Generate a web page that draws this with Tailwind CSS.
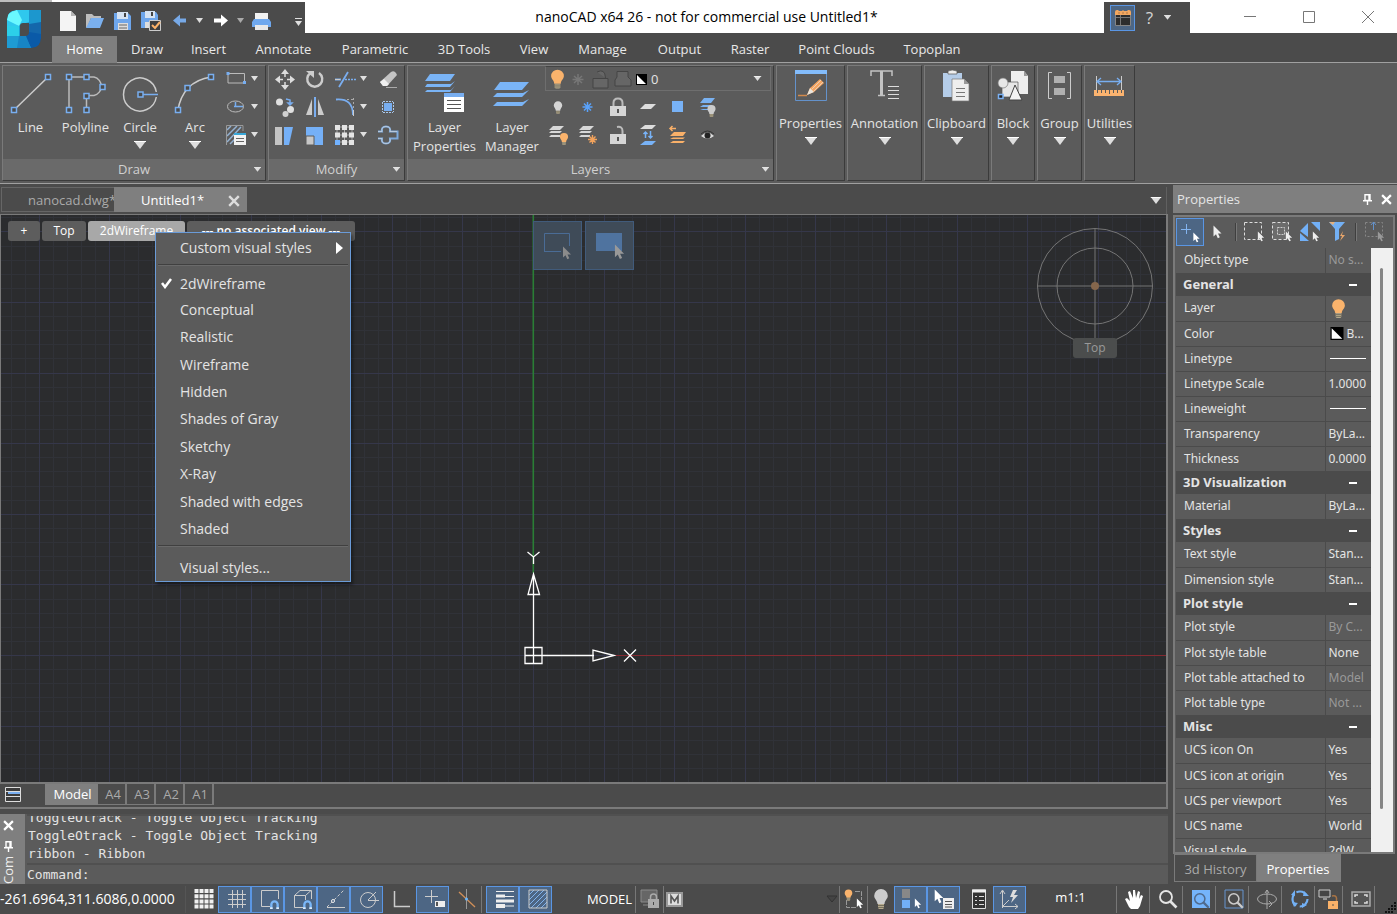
<!DOCTYPE html>
<html lang="en">
<head>
<meta charset="utf-8">
<title>nanoCAD x64 26</title>
<script src="https://cdn.jsdelivr.net/npm/@tailwindcss/browser@4"></script>
</head>
<body class="bg-[#4b4b4b]">
<svg width="0" height="0" class="absolute" aria-hidden="true">
  <defs>
    <symbol id="down" viewBox="0 0 12 8"><path d="M0 0H12L6 8Z" fill="#dedede"/><path d="M0 .5H12" stroke="#fff"/></symbol>
    <symbol id="bulb" viewBox="0 0 16 20"><path d="M8 0a6.800 6.800 0 0 1 6.800 6.800C14.800 10 11.500 11.500 11.500 15h-7C4.500 11.500 1.200 10 1.200 6.800A6.800 6.800 0 0 1 8 0Z" fill="currentColor"/><path d="M5 15h6v4l-1 1H6l-1-1z" fill="#b5a98c"/><path d="M5 16.500h6M5 18.500h6" stroke="#75705f"/></symbol>
    <symbol id="cur" viewBox="0 0 9 14"><path d="M.5 .5V11.500L3 9.200L4.800 13.200L6.800 12.300L5 8.500H8.500Z" fill="currentColor"/></symbol>
    <symbol id="pin" viewBox="0 0 9 11"><path d="M2 .8H7V6.500H2ZM6 1V6M0 6.800H9M4.500 7V11" fill="none" stroke="#fff" stroke-width="1.400"/></symbol>
    <symbol id="x" viewBox="0 0 10 10"><path d="M1 1L9 9M9 1L1 9" stroke="currentColor" stroke-width="2"/></symbol>
    <symbol id="lens" viewBox="0 0 20 20"><circle cx="8" cy="8" r="6" fill="none" stroke="currentColor" stroke-width="1.800"/><path d="M12.500 12.500L18.500 18.500" stroke="currentColor" stroke-width="2.600"/></symbol>
    <symbol id="magnet" viewBox="0 0 10 10"><path d="M1.500 10V5A3.500 3.500 0 0 1 8.500 5V10" fill="none" stroke="#7ab7f8" stroke-width="2.600"/><path d="M0 9H3M7 9H10" stroke="#fff" stroke-width="1.500"/></symbol>
    <symbol id="bw" viewBox="0 0 11 11"><path d="M0 0H11V11H0Z" fill="#000"/><path d="M1 1L10 10H1Z" fill="#fff"/></symbol>
  </defs>
</svg>

<div class="flex h-screen flex-col overflow-hidden bg-[#4b4b4b] text-[13px] leading-[18px] text-[#e4e4e4] font-['Open_Sans','Noto_Sans',sans-serif]">

<!-- Title bar and ribbon tabs -->
<header class="flex shrink-0">
  <div class="w-[52px] shrink-0 border-t-2 border-[#bdbdbd] bg-[#4b4b4b] pt-2 pl-[7px]">
    <svg width="35" height="38" viewBox="0 0 35 38" aria-label="nanoCAD">
      <path d="M10 0H34V28L24 38H0V10Z" fill="#1b9fd4"/>
      <path d="M10 0H22V12L12 15L0 22V11Q0 0 10 0Z" fill="#2fc8ee"/><path d="M10 0L15 10L12 16L0 10Q0 2 10 0Z" fill="#6af8ff"/><path d="M0 16L12 16V26H0Z" fill="#2ccfe9"/><path d="M0 26H13L10 38H0Z" fill="#1e9bd3"/>
      <path d="M22 0H34V13L22 14Z" fill="#1c97ce"/><path d="M22 14L34 12V26H22Z" fill="#1467ab"/><path d="M22 22L34 24V28Q34 38 24 38L18 26Z" fill="#0a5aa8"/><path d="M12 26H19L24 38H10Z" fill="#1785c5"/>
      <path d="M13 16Q13 13 16 13H22V22Q22 26 18 26H13Z" fill="#4b4b4b"/>
      <path d="M0 0H9Q0 1 0 9ZM35 29V38H25Q34 37 34 28Z" fill="#4b4b4b"/>
    </svg>
  </div>
  <div class="min-w-0 flex-1">
    <div class="flex h-[33px] bg-white">
      <div class="mt-[2px] flex w-[253px] shrink-0 items-center bg-[#4b4b4b]">
        <svg width="253" height="31" viewBox="52 2 253 31" aria-label="Quick access">
          <path d="M60 11H71L76 16V31H60Z" fill="#f4f4f4"/><path d="M71 11V16H76Z" fill="#b5b5b5"/>
          <path d="M86 27V14H92L94 16H101V18H91L87 28Z" fill="#bdbdbd"/><path d="M91 18H104L100 28H86Z" fill="#7ab0ef"/>
          <path d="M114 13H128L131 16V30H114Z" fill="#6ea6ec"/><path d="M117 12H128V19H117Z" fill="#d6e3f3"/><path d="M124 13H126V17H124Z" fill="#444"/><path d="M118 23H128V30H118Z" fill="#ddd"/><path d="M119 25H127M119 28H127" stroke="#666"/>
          <path d="M141 12H156L158 15V28H141Z" fill="#6ea6ec"/><path d="M145 11H155V18H145Z" fill="#d6e3f3"/><path d="M151 12H153V16H151Z" fill="#444"/><path d="M145 22H151V28H145Z" fill="#ddd"/><path d="M149.500 20.500H160.500V30.500H149.500Z" fill="#3e3e3e" stroke="#ccc"/><path d="M152 25L155 28L160 22" stroke="#fbb168" stroke-width="2" fill="none"/>
          <path d="M173 20.500L180 14.500V18.500H186V22.500H180V26.500Z" fill="#77a9e7"/><path d="M196 18H203L199.500 23Z" fill="#ddd"/>
          <path d="M228 20.500L221 14.500V18.500H214V22.500H221V26.500Z" fill="#fff"/><path d="M237 18H244L240.500 23Z" fill="#aaa"/>
          <path d="M255 13H268V21H255Z" fill="#f1f1f1"/><path d="M254 19H269L271 22V27H252V22Z" fill="#6fa8ee"/><path d="M255 25H268V30H255Z" fill="#e8e8e8"/>
          <path d="M295 18.500H302" stroke="#e0e0e0"/><path d="M295 21H302L298.500 26Z" fill="#e0e0e0"/>
        </svg>
      </div>
      <h1 class="min-w-0 flex-1 truncate pt-2 pl-1 text-center text-[14px] text-black">nanoCAD x64 26 - not for commercial use Untitled1*</h1>
      <div class="mt-[2px] flex w-[86px] shrink-0 items-center bg-[#4b4b4b] pl-[6px]">
        <button class="h-[26px] w-[25px] border border-[#5a96e4] bg-[#4d6684] pl-[3px]" aria-label="Ribbon"><svg width="18" height="18" viewBox="0 0 18 18"><path d="M1.500 5H16.500V16.500H1.500Z" fill="#2d2d2d" stroke="#858585"/><path d="M6.500 6V16M2 8.500H16" stroke="#777"/><path d="M1 3Q1 1 3 1H4L5 2H8L9 1L10 2H13L14 1H15Q17 1 17 3V6H1Z" fill="#f2a760"/><path d="M4.500 4H5.500M8.500 4H9.500M12.500 4H13.500" stroke="#6b4a2c"/></svg></button>
        <button class="w-[29px] text-center text-[17px] text-[#d5d5d5]">?</button>
        <svg width="7" height="5"><use href="#down"/></svg>
      </div>
      <div class="flex grow-0 basis-[207px] justify-end">
        <button class="w-[59px]" aria-label="Minimize"><svg class="mx-auto" width="12" height="12"><path d="M0 5.500H12" stroke="#777"/></svg></button>
        <button class="w-[59px]" aria-label="Maximize"><svg class="mx-auto" width="12" height="12"><path d="M.5 .5H11.500V11.500H.5Z" fill="none" stroke="#777"/></svg></button>
        <button class="w-[59px]" aria-label="Close"><svg class="mx-auto" width="12" height="12"><path d="M0 0L12 12M12 0L0 12" stroke="#777"/></svg></button>
      </div>
    </div>
    <nav class="flex h-[29px] items-end text-[#e8e8e8]">
      <a href="#" class="relative z-10 -mb-px h-[27px] w-[65px] bg-[#7f7f7f] pt-1 text-center text-white">Home</a>
      <a href="#" class="h-[26px] w-[60px] pt-1 text-center">Draw</a>
      <a href="#" class="h-[26px] w-[63px] pt-1 text-center">Insert</a>
      <a href="#" class="h-[26px] w-[87px] pt-1 text-center">Annotate</a>
      <a href="#" class="h-[26px] w-[96px] pt-1 text-center">Parametric</a>
      <a href="#" class="h-[26px] w-[82px] pt-1 text-center">3D Tools</a>
      <a href="#" class="h-[26px] w-[58px] pt-1 text-center">View</a>
      <a href="#" class="h-[26px] w-[79px] pt-1 text-center">Manage</a>
      <a href="#" class="h-[26px] w-[75px] pt-1 text-center">Output</a>
      <a href="#" class="h-[26px] w-[66px] pt-1 text-center">Raster</a>
      <a href="#" class="h-[26px] w-[107px] pt-1 text-center">Point Clouds</a>
      <a href="#" class="h-[26px] w-[84px] pt-1 text-center">Topoplan</a>
    </nav>
  </div>
</header>

<!-- Ribbon -->
<section class="flex shrink-0 gap-[2px] border-y border-[#a0a0a0] bg-[#5b5b5b] p-[2px] [&>div]:h-[116px] [&>div]:border [&>div]:border-t-[#7a7a7a] [&>div]:border-l-[#7a7a7a] [&>div]:border-r-[#3b3b3b] [&>div]:border-b-[#3b3b3b]">
  <div class="flex w-[264px] flex-col">
    <div class="flex flex-1">
      <button class="flex w-[55px] flex-col items-center pt-[6px]"><svg width="42" height="42" viewBox="10 72 42 42"><path d="M14 110L48 77" stroke="#ccc" stroke-width="1.500"/><path d="M11.500 107.500h5v5h-5zM45.500 74.500h5v5h-5z" fill="#4b4b4b" stroke="#78aef0" stroke-width="1.500"/></svg><span class="pt-1">Line</span></button>
      <button class="flex w-[55px] flex-col items-center pt-[6px]"><svg width="42" height="42" viewBox="64 72 42 42"><path d="M68 110V77H93A9.500 9.500 0 0 1 93 95.500H85.500V110" fill="none" stroke="#bbb" stroke-width="1.500"/><path d="M65.500 107.500h5v5h-5zM65.500 74.500h5v5h-5zM83 74.500h5v5h-5zM99 84.500h5v5h-5zM83 93.500h5v5h-5zM83 107.500h5v5h-5z" fill="#4b4b4b" stroke="#78aef0" stroke-width="1.500"/></svg><span class="pt-1">Polyline</span></button>
      <button class="flex w-[54px] flex-col items-center pt-[6px]"><svg width="42" height="42" viewBox="119 72 42 42"><path d="M156.300 97A16.500 16.500 0 1 1 156.300 92" fill="none" stroke="#ccc" stroke-width="1.500"/><path d="M143 94.500H158" stroke="#78aef0" stroke-width="1.500"/><path d="M138 92h5v5h-5z" fill="#4b4b4b" stroke="#78aef0" stroke-width="1.500"/></svg><span class="pt-1 pb-[5px]">Circle</span><svg width="12" height="8"><use href="#down"/></svg></button>
      <button class="flex w-[56px] flex-col items-center pt-[6px]"><svg width="42" height="42" viewBox="173 72 42 42"><path d="M177 110Q179 97 187 88Q196 79 210 77" fill="none" stroke="#ccc" stroke-width="1.500"/><path d="M174.500 107.500h5v5h-5zM184 85.500h5v5h-5zM207.500 74.500h5v5h-5z" fill="#4b4b4b" stroke="#78aef0" stroke-width="1.500"/></svg><span class="pt-1 pb-[5px]">Arc</span><svg width="12" height="8"><use href="#down"/></svg></button>
      <svg class="mt-[2px]" width="38" height="86" viewBox="223 68 38 86" aria-label="Shapes"><path d="M228 73.500H244.500V83H228Z" fill="none" stroke="#bbb"/><path d="M226.500 72h3v3h-3zM243 81h3v3h-3z" fill="#78aef0"/><ellipse cx="235.500" cy="106.500" rx="8" ry="5.500" fill="none" stroke="#bbb"/><path d="M235.500 107V102M234 106.500H243" stroke="#78aef0" stroke-width="1.500"/><path d="M227 130L231 126M227 136L237 126M227 142L241 127M230 144L235 139" stroke="#93b1d2" stroke-width="1.500"/><path d="M226.500 145V125.500H243V131" fill="none" stroke="#999"/><path d="M234 133H246V145H234Z" fill="#f2f2f2"/><path d="M234 133H246V135H234Z" fill="#38a7d8"/><path d="M236 138.500H244M236 141.500H244" stroke="#666"/><path d="M251 76H258L254.500 81ZM251 104H258L254.500 109ZM251 132H258L254.500 137Z" fill="#e0e0e0"/></svg>
    </div>
    <button class="flex h-[21px] items-center bg-[#6a6a6a] pr-1 pb-[2px] pl-[11px] text-[#d0d0d0]"><span class="flex-1">Draw</span><svg class="mt-[2px]" width="7" height="5"><use href="#down"/></svg></button>
  </div>

  <div class="flex w-[137px] flex-col">
    <div class="flex flex-1"><svg width="132" height="90" viewBox="269 66 132 90" aria-label="Modify tools">
      <path d="M285 69L289 74H281ZM285 90L289 85H281ZM275 79.500L280 75.500V83.500ZM295 79.500L290 75.500V83.500Z" fill="#ddd"/><path d="M285 74V77M285 82V85M279 79.500H283M287 79.500H291" stroke="#ddd" stroke-width="1.500"/>
      <path d="M310.500 73A7.500 7.500 0 1 0 319 73" fill="none" stroke="#ccc" stroke-width="2.400"/><path d="M306 71H314V78Z" fill="#ccc"/>
      <path d="M335 79.500H341M339 87L348 72" stroke="#7aaef0" stroke-width="1.800"/><path d="M335 79.500H340" stroke="#ccc"/><path d="M345 79.500H356" stroke="#7aaef0" stroke-width="1.500" stroke-dasharray="2 1"/>
      <path d="M380 82L391 72Q394 70 396 73L397 75L387 86H383Z" fill="#c4c4c4"/><path d="M380 82L384 79L389 84L387 86H383Z" fill="#f0f0f0"/><path d="M386 87.500H397" stroke="#aaa"/>
      <circle cx="279.500" cy="102" r="3.500" fill="#e0e0e0"/><circle cx="290.500" cy="109.500" r="3.500" fill="#e0e0e0"/><circle cx="285.500" cy="114" r="3" fill="#d0d0d0"/><path d="M286 99L290 100V103M288 103H292L290 105Z" stroke="#7aaef0" fill="none" stroke-width="1.500"/>
      <path d="M312 99V115H306ZM318 99V115H324Z" fill="#ccc"/><path d="M315 97V117" stroke="#7aaef0" stroke-width="2"/>
      <path d="M336 99.500Q353 98 353 115" stroke="#7aaef0" stroke-width="1.800" fill="none"/><path d="M347 99.500H354M353.500 98V108" stroke="#aaa" stroke-dasharray="2 2"/><path d="M353.500 110V116" stroke="#ccc"/>
      <path d="M384 103H392V111H384Z" fill="#78aef0"/><path d="M382.500 102V112M393.500 102V112M383 101.500H393M383 112.500H393" stroke="#aac8ec" stroke-dasharray="2 1"/>
      <path d="M275 127H282V145H275Z" fill="#c4c4c4"/><path d="M284 127H293L289 145H284Z" fill="#75b0f7"/>
      <path d="M306 127H323V145H306Z" fill="#75b0f7"/><path d="M306 136H314V145H306Z" fill="#c7c7c7" stroke="#5b5b5b"/>
      <path d="M337 127H352V142H337V127M344.500 127V142M337 135H352" fill="none" stroke="#aaa"/><path d="M335 125h5v5h-5zM342 125h5v5h-5zM349 125h5v5h-5zM335 132.500h5v5h-5zM342 132.500h5v5h-5zM349 132.500h5v5h-5zM342 140h5v5h-5zM349 140h5v5h-5z" fill="#e4e4e4"/><path d="M335 140h5v5h-5z" fill="#72b2ff"/>
      <path d="M378 131.500H382Q381 126.500 386 126.500Q391 126.500 390 131.500H397.500V138.500H390Q391 143.500 386 143.500Q381 143.500 382 138.500H378" fill="none" stroke="#7da9dc" stroke-width="2"/><path d="M378 131.500H382Q381 126.500 386 126.500Q391 126.500 390 131.500H397M378 138.500H382Q381 143.500 386 143.500Q391 143.500 390 138.500" fill="none" stroke="#ddd" stroke-width=".6"/>
      <path d="M360 76H367L363.500 81ZM360 104H367L363.500 109ZM360 132H367L363.500 137Z" fill="#e0e0e0"/>
    </svg></div>
    <button class="flex h-[21px] items-center bg-[#6a6a6a] pr-1 pb-[2px] pl-[11px] text-[#d0d0d0]"><span class="flex-1">Modify</span><svg class="mt-[2px]" width="7" height="5"><use href="#down"/></svg></button>
  </div>

  <div class="flex w-[367px] flex-col">
    <div class="flex flex-1">
      <button class="flex w-[73px] flex-col items-center pt-[8px] leading-[19px]"><svg width="40" height="40" viewBox="425 75 40 40"><path d="M430 75H455L450 82H425ZM427 85H451L455 82L450 88H425ZM427 91H451L455 87L450 93H425Z" fill="#7ab4f6"/><path d="M444 94H464V113H444Z" fill="#fff"/><path d="M444 94H464V98H444Z" fill="#78aef0"/><path d="M447 101.500H461M447 105.500H461M447 109.500H461" stroke="#555"/></svg><span class="pt-1">Layer<br>Properties</span></button>
      <button class="flex w-[62px] flex-col items-center pt-[8px] leading-[19px]"><svg width="40" height="40" viewBox="491 74 40 40"><path d="M499 82H528L521 90H493ZM496 93H522L528 90L521 97H492ZM496 102H522L528 99L521 106H492Z" fill="#7ab4f6"/></svg><span class="pt-1">Layer<br>Manager</span></button>
      <div class="flex-1">
        <div class="mr-[2px] ml-[2px] flex h-[25px] items-center border border-[#6e6e6e] border-t-[#444] pl-1">
          <svg width="101" height="22" viewBox="551 68 101 22"><use href="#bulb" x="551" y="69" width="15" height="20" class="text-[#fab36c]"/><g stroke="#777" stroke-width="1.500"><path d="M579 74V85M573.500 79.500H584.500M575 76L583 83M583 76L575 83"/></g><path d="M594 78.500H609V88H594ZM598 72Q606 68 606.500 78" fill="#666" stroke="#454545"/><path d="M618 71.500H629V77L632 80V86H616V80L618 77Z" fill="#666" stroke="#454545"/><use href="#bw" x="637" y="74" width="11" height="11"/></svg>
          <select aria-label="Current layer" class="h-5 flex-1 appearance-none bg-transparent text-[13px] leading-[18px]"><option>0</option></select>
          <svg class="mr-2" width="9" height="5"><use href="#down"/></svg>
        </div>
        <svg width="190" height="60" viewBox="543 91 190 60" aria-label="Layer tools">
          <use href="#bulb" x="553" y="101" width="10" height="13" class="text-[#d5d5d5]"/>
          <path d="M587.500 102V112M582.500 107H592.500M584 103.500L591 110.500M591 103.500L584 110.500" stroke="#5aa2fa" stroke-width="1.500"/>
          <path d="M613.500 106V103Q613.500 98.500 618 98.500Q622.500 98.500 622.500 103V106" fill="none" stroke="#bbb" stroke-width="2"/><path d="M610 106H626V116H610Z" fill="#d5d5d5"/><path d="M618 109V113" stroke="#555" stroke-width="2"/>
          <path d="M645 104H656L651 109H640Z" fill="#ddd"/><path d="M672 101H683V112H672Z" fill="#78b2f6"/>
          <path d="M704 98H715L711 103H700ZM703 105H712L710 107H700ZM703 109H710V110H700Z" fill="#7ab2f2"/><use href="#bulb" x="706" y="105" width="11" height="12" class="text-[#ccc]"/>
          <path d="M553 126H564L560 130H549ZM551 131H562L560 133H549ZM551 135H560V137H549Z" fill="#d8d8d8"/><use href="#bulb" x="559" y="133" width="10" height="12" class="text-[#fab36c]"/>
          <path d="M583 126H594L590 130H579ZM581 131H592L590 133H579ZM581 135H590V137H579Z" fill="#d8d8d8"/><path d="M592.500 135V144M588 139.500H597M589.500 136.500L595.500 142.500M595.500 136.500L589.500 142.500" stroke="#f3a35c" stroke-width="1.400"/>
          <path d="M622.500 134V131Q622.500 126 617 127" fill="none" stroke="#bbb" stroke-width="2"/><path d="M610 134H626V144H610Z" fill="#d5d5d5"/><path d="M618 137V141" stroke="#555" stroke-width="2"/>
          <path d="M645 125H656L652 129H640Z" fill="#ddd"/><path d="M645 141H656L652 145H640Z" fill="#78b2f6"/><path d="M645.500 138V132M643.500 134L645.500 132L647.500 134M650.500 131V138M648.500 136L650.500 138L652.500 136" stroke="#78b2f6" fill="none" stroke-width="1.500"/>
          <path d="M670 128.500H676M672.500 126L670 128.500L672.500 131" stroke="#f9b069" stroke-width="1.500" fill="none"/><path d="M674 132H686L683 136H670ZM673 137.500H685L683 139H670ZM673 141H685L683 143H670Z" fill="#f9b069"/>
          <path d="M701 136Q707.500 129 714 136Q707.500 141 701 136Z" fill="#ddd"/><circle cx="707.500" cy="135.500" r="3" fill="#222"/><path d="M701 134Q707.500 128 714 134" stroke="#333" fill="none"/>
        </svg>
      </div>
    </div>
    <button class="flex h-[21px] items-center bg-[#6a6a6a] pr-1 pb-[2px] pl-[11px] text-[#d0d0d0]"><span class="flex-1">Layers</span><svg class="mt-[2px]" width="7" height="5"><use href="#down"/></svg></button>
  </div>

  <div class="w-[69px]"><button class="flex w-full flex-col items-center pt-1"><svg width="32" height="32"><path d="M.5 2H31.500V30.500H.5Z" fill="none" stroke="#6492cb"/><path d="M0 0H32V4H0Z" fill="#83bcfb"/><path d="M12 25L15 18L25 9L29 13L19 22Z" fill="#f6a561"/><path d="M17 19L26 10M19 21L28 12" stroke="#e7e0d7" stroke-width=".7"/><path d="M12 25L15 18L19 22Z" fill="#e9e5dd"/><path d="M3 25.500H12" stroke="#d28a4c" stroke-width="1.500"/></svg><span class="pt-[12px] pb-[5px]">Properties</span><svg width="12" height="8"><use href="#down"/></svg></button></div>
  <div class="w-[75px]"><button class="flex w-full flex-col items-center pt-1"><svg width="32" height="32"><path d="M2 6V1H23V6M9 25.500H16" stroke="#c3c3c3" fill="none" stroke-width="1.500"/><path d="M11 1H14V25H11Z" fill="#c3c3c3"/><path d="M19 16.500H30M19 20.500H30M19 24.500H30M19 28.500H30" stroke="#ddd"/></svg><span class="pt-[12px] pb-[5px]">Annotation</span><svg width="12" height="8"><use href="#down"/></svg></button></div>
  <div class="w-[65px]"><button class="flex w-full flex-col items-center pt-1"><svg width="32" height="32"><path d="M2 3H21V27H2Z" fill="#b5cde9"/><path d="M7 1Q11 -1 16 1V4H7Z" fill="#eee" stroke="#555" stroke-width=".7"/><path d="M11 9H23L28 14V31H11Z" fill="#eee" stroke="#777" stroke-width=".7"/><path d="M23 9V14H28Z" fill="#999"/><path d="M15 18.500H24M15 22.500H24M15 26.500H24" stroke="#777"/></svg><span class="pt-[12px] pb-[5px]">Clipboard</span><svg width="12" height="8"><use href="#down"/></svg></button></div>
  <div class="w-[44px]"><button class="flex w-full flex-col items-center pt-1"><svg width="32" height="32"><path d="M14 1H27L31 6V24H14Z" fill="#eee"/><path d="M27 1V6H31Z" fill="#999"/><path d="M5 12H21V27H5Z" fill="#e7e7e7" stroke="#555" stroke-width=".7"/><circle cx="6" cy="13" r="5" fill="#e7e7e7" stroke="#777" stroke-width=".7"/><path d="M18 15L25 30H12Z" fill="#f4f4f4" stroke="#444"/><path d="M1.500 24.500H6V28.500H1.500Z" fill="#222" stroke="#7ab0f2" stroke-width="1.500"/></svg><span class="pt-[12px] pb-[5px]">Block</span><svg width="12" height="8"><use href="#down"/></svg></button></div>
  <div class="w-[45px]"><button class="flex w-full flex-col items-center pt-1"><svg width="32" height="32"><path d="M8 2.500H4.500V28.500H8M23 2.500H26.500V28.500H23" fill="none" stroke="#ccc"/><path d="M10 6H21V13H10ZM10 18H21V25H10Z" fill="#b0b0b0"/></svg><span class="pt-[12px] pb-[5px]">Group</span><svg width="12" height="8"><use href="#down"/></svg></button></div>
  <div class="w-[51px]"><button class="flex w-full flex-col items-center pt-1"><svg width="32" height="32"><path d="M2.500 6V20M27.500 6V20" stroke="#ccc"/><path d="M3 11.500H27M7 8L3 11.500L7 15M23 8L27 11.500L23 15" stroke="#78aef0" fill="none" stroke-width="1.300"/><path d="M0 20H30V26H0Z" fill="#fbb36f"/><path d="M3.500 20V23M7.500 20V23M11.500 20V23M15.500 20V24M19.500 20V23M23.500 20V23M27.500 20V23" stroke="#5b5b5b"/></svg><span class="pt-[12px] pb-[5px]">Utilities</span><svg width="12" height="8"><use href="#down"/></svg></button></div>
</section>

<!-- Work area -->
<main class="flex min-h-0 flex-1">
  <section class="flex min-w-0 flex-1 flex-col">
    <div class="mt-[3px] mr-px ml-px flex h-[27px] shrink-0 items-start border-r border-[#606060] pr-1">
      <a href="#" class="h-[25px] w-[113px] overflow-hidden border border-r-0 border-[#666] pt-[3px] pl-[26px] whitespace-nowrap text-[#aaa]">nanocad.dwg*</a>
      <a href="#" class="flex h-[25px] w-[133px] items-center justify-between bg-[#7f7f7f] pt-px pr-[7px] pl-[27px] text-white">Untitled1*<svg width="12" height="12" class="mt-px text-[#ddd]"><use href="#x"/></svg></a>
      <svg class="mt-[10px] ml-auto" width="12" height="7"><use href="#down"/></svg>
    </div>

    <div class="relative min-h-0 flex-1 overflow-hidden border-t border-r-2 border-l border-[#7a7a7a] bg-[#2b2c2e]">
      <svg class="absolute inset-0 h-full w-full" shape-rendering="crispEdges">
        <path id="minor" stroke="#303238" fill="none"/><path id="major" stroke="#35374a" fill="none"/>
      </svg>
      <svg class="absolute inset-0 h-full w-full" fill="none" stroke="#fff" stroke-width="1.300">
        <path d="M532.300 0V358" stroke="#2a7e35" stroke-width="1.600"/>
        <path d="M614 440.500H3000" stroke="#842a31" stroke-width="1.200"/>
        <path d="M532.500 448V360M524 440.500H593M524 432.500H541V448.500H524ZM532.500 359L527 379.500H538.500ZM613 440.500L592 435V446ZM526.500 337L532.500 342L538.500 337M532.500 342V349M623 434.500L635 446.500M635 434.500L623 446.500"/>
      </svg>
      <div class="absolute top-[6px] left-[7px] flex gap-[2px] text-[12px] font-medium text-white">
        <button class="h-[20px] w-[32px] rounded-[3px] bg-[#5d5d5d]">+</button>
        <button class="h-[20px] w-[44px] rounded-[3px] bg-[#5d5d5d]">Top</button>
        <button class="h-[20px] w-[97px] rounded-[3px] bg-[#a8a8a8]">2dWireframe</button>
        <button class="h-[20px] w-[168px] rounded-[3px] bg-[#5d5d5d] font-semibold">--- no associated view ---</button>
      </div>
      <div class="absolute top-[6px] left-[532px] flex gap-[3px]">
        <button aria-label="Window selection" class="h-[49px] w-[49px] border border-[#415b7b] bg-[#3f4b58]"><svg width="47" height="47"><path d="M10.500 29V11.500H35.500V24M10 29.500H27" fill="none" stroke="#4a6c96"/><use href="#cur" x="28" y="24" width="10" height="14" class="text-[#8b8b8b]"/></svg></button>
        <button aria-label="Crossing selection" class="h-[49px] w-[49px] border border-[#415b7b] bg-[#3f4b58]"><svg width="47" height="47"><path d="M10 11H36V29H10Z" fill="#4f739f"/><use href="#cur" x="28" y="22" width="11" height="16" class="text-[#999]"/></svg></button>
      </div>
      <svg class="absolute top-[12px] right-[12px]" width="118" height="118" fill="none" stroke="#757575"><circle cx="59" cy="59" r="57.500"/><circle cx="59" cy="59" r="38"/><path d="M59 1V117M1 59H117"/><circle cx="59" cy="59" r="4" fill="#85664c" stroke="none"/></svg>
      <button class="absolute top-[123px] right-[49px] h-[20px] w-[44px] rounded-[3px] bg-[#4b4d4d] text-[12px] text-[#999]">Top</button>

      <ul class="absolute top-[17px] left-[154px] h-[350px] w-[196px] border border-[#6a9bd8] bg-[#5b5b5b] text-[14px] shadow-[2px_3px_3px_rgba(0,0,0,0.4)]" role="menu">
        <li class="flex h-[30px] items-center justify-between pr-[7px] pl-6" role="menuitem">Custom visual styles<svg width="7" height="12"><path d="M0 0L7 6L0 12Z" fill="#fff"/></svg></li>
        <li class="mx-[2px] mt-px h-[2px] border-t border-[#404040] bg-[#6a6a6a]" role="separator"></li>
        <li class="mt-[5px] flex h-[25px] items-center" role="menuitem"><svg class="mx-[5px]" width="11" height="11"><path d="M1 5L4 9L10 1" fill="none" stroke="#fff" stroke-width="2.500"/></svg><span class="pl-[3px]">2dWireframe</span></li>
        <li><ul class="grid h-[247px] grid-rows-9 items-center pl-6">
          <li role="menuitem">Conceptual</li><li role="menuitem">Realistic</li><li role="menuitem">Wireframe</li><li role="menuitem">Hidden</li><li role="menuitem">Shades of Gray</li><li role="menuitem">Sketchy</li><li role="menuitem">X-Ray</li><li role="menuitem">Shaded with edges</li><li role="menuitem">Shaded</li>
        </ul></li>
        <li class="mx-[2px] mt-[2px] h-[2px] border-t border-[#404040] bg-[#6a6a6a]" role="separator"></li>
        <li class="mt-[8px] flex h-[26px] items-center pl-6" role="menuitem">Visual styles...</li>
      </ul>
    </div>

    <div class="flex h-[27px] shrink-0 items-start border-y-2 border-r-2 border-[#7a7a7a] pl-[5px]">
      <button class="mt-[3px] mr-[24px]" aria-label="Layouts"><svg width="16" height="15"><path d="M.5 .5H15.500V14.500H.5Z" fill="#3c3c3c" stroke="#ddd"/><path d="M3 5H15V7H3Z" fill="#78aef0"/><path d="M1 4.500H15M1 9.500H15" stroke="#ddd"/></svg></button>
      <a href="#" class="h-[21px] w-[53px] bg-[#7f7f7f] pt-px pl-[2px] text-center text-white">Model</a>
      <a href="#" class="h-[21px] w-[29px] border-r-2 border-b border-[#7a7a7a] pt-px pl-[3px] text-center text-[#aaa]">A4</a>
      <a href="#" class="h-[21px] w-[29px] border-r-2 border-b border-[#7a7a7a] pt-px pl-[3px] text-center text-[#aaa]">A3</a>
      <a href="#" class="h-[21px] w-[29px] border-r-2 border-b border-[#7a7a7a] pt-px pl-[3px] text-center text-[#aaa]">A2</a>
      <a href="#" class="h-[21px] w-[29px] border-r-2 border-b border-[#7a7a7a] pt-px pl-[3px] text-center text-[#aaa]">A1</a>
    </div>

    <div class="mt-[5px] flex h-[70px] shrink-0 bg-[#5b5b5b]">
      <div class="flex w-[25px] flex-col items-center overflow-hidden bg-[#7f7f7f] pt-[6px] pr-[9px]">
        <svg width="11" height="11" class="text-white"><use href="#x"/></svg>
        <svg class="mt-[10px] shrink-0" width="9" height="11"><use href="#pin"/></svg>
        <span class="mt-[2px] h-[30px] rotate-180 text-[13px] text-[#eee] [writing-mode:vertical-rl]">Com</span>
      </div>
      <div class="flex min-w-0 flex-1 flex-col font-['DejaVu_Sans_Mono',monospace] text-[13px]">
        <div class="ml-[2px] flex h-[51px] flex-col justify-end overflow-hidden border-y-2 border-[#505050] pl-px whitespace-pre"><div>ToggleOtrack - Toggle Object Tracking</div><div>ToggleOtrack - Toggle Object Tracking</div><div>ribbon - Ribbon</div></div>
        <label class="flex pt-px pl-[2px]">Command:<input class="ml-1 min-w-0 flex-1 bg-transparent outline-none"></label>
      </div>
    </div>
  </section>

  <aside class="ml-[5px] flex w-[224px] shrink-0 flex-col">
    <div class="mt-px flex h-[28px] shrink-0 items-center bg-[#7f7f7f] pr-[5px] pl-[4px]"><h2 class="flex-1">Properties</h2><svg class="mr-[9px]" width="9" height="11"><use href="#pin"/></svg><svg width="11" height="11" class="text-white"><use href="#x"/></svg></div>
    <div class="mt-[2px] mr-[2px] flex min-h-0 flex-1 flex-col border-2 border-[#7a7a7a] bg-[#5b5b5b]">
      <div class="flex h-[31px] shrink-0 items-start overflow-hidden pt-px pl-px">
        <button aria-label="Add to selection" class="h-[28px] w-[28px] shrink-0 border border-[#5a96e4] bg-[#4d6684]"><svg width="26" height="26"><path d="M4 10.500H14M9.500 5V15" stroke="#83b4f0"/><use href="#cur" x="15" y="13" width="9" height="11" class="text-white"/></svg></button>
        <svg width="188" height="28" viewBox="1204 218 188 28" class="text-[#eee]"><use href="#cur" x="1213" y="225" width="9" height="14"/><path d="M1235.500 223V241M1355.500 223V241" stroke="#3f3f3f"/><path d="M1236.500 223V241M1356.500 223V241" stroke="#777"/>
        <path d="M1244.500 222.500H1261.500V239.500H1244.500Z" fill="none" stroke="#ddd" stroke-dasharray="3 2"/><use href="#cur" x="1257" y="231" width="8" height="11"/>
        <path d="M1272.500 222.500H1288.500V239.500H1272.500Z" fill="#6c6c6c" stroke="#ddd" stroke-dasharray="3 2"/><path d="M1277.500 227.500H1284.500V234.500H1277.500Z" fill="none" stroke="#ccc" stroke-dasharray="2 1"/><use href="#cur" x="1285" y="231" width="8" height="11"/>
        <path d="M1300 231L1308 223V237ZM1300 233L1309 241H1300ZM1311 222H1320V231Z" fill="#72b0f7"/><use href="#cur" x="1312" y="231" width="8" height="11"/>
        <path d="M1329 222H1345L1339 229V239L1335 241V229Z" fill="#73b0f4"/><path d="M1329 222H1335L1333 225Z" fill="#e7b179"/><path d="M1343 231L1340 236H1342L1340 241L1345 235H1342Z" fill="#e8a56a"/>
        <path d="M1365.500 222.500H1382.500V236.500H1365.500Z" fill="none" stroke="#888" stroke-dasharray="2 2"/><path d="M1373.500 230V222M1371 225L1373.500 222L1376 225" stroke="#6492cb" fill="none"/><use href="#cur" x="1377" y="231" width="8" height="11" class="text-[#999]"/></svg>
      </div>
      <div class="flex min-h-0 flex-1">
        <div class="ml-px min-w-0 flex-1 overflow-hidden">
        <table class="w-full table-fixed border-collapse text-left font-['Noto_Sans','Open_Sans',sans-serif] text-[12px] leading-[16px] [&_td]:h-[25px] [&_td]:overflow-hidden [&_td]:border-b [&_td]:border-l [&_td]:border-[#4b4b4b] [&_td]:p-0 [&_td]:pl-[3px] [&_td]:text-ellipsis [&_td]:whitespace-nowrap [&_th]:p-0 [&_th]:font-normal [&_th[scope=row]]:border-b [&_th[scope=row]]:border-[#4b4b4b] [&_th[scope=row]]:pl-[8px]">
          <colgroup><col><col class="w-[46px]"></colgroup>
          <tbody class="[&_span]:float-right [&_span]:mt-[8px] [&_span]:mr-[14px] [&_span]:h-[2px] [&_span]:w-[8px] [&_span]:bg-white [&_th[colspan]]:h-[23px] [&_th[colspan]]:bg-[#4b4b4b] [&_th[colspan]]:pb-[2px] [&_th[colspan]]:pl-[7px] [&_th[colspan]]:text-[13px] [&_th[colspan]]:font-bold">
          <tr><th scope="row">Object type</th><td class="text-[#999]">No s...</td></tr>
          <tr><th colspan="2">General<span></span></th></tr>
          <tr><th scope="row">Layer</th><td><svg class="ml-[2px]" width="15" height="19"><use href="#bulb" class="text-[#fab36c]"/></svg></td></tr>
          <tr><th scope="row">Color</th><td><div class="flex items-center gap-[3px] pl-px"><svg width="14" height="13"><use href="#bw"/></svg>B...</div></td></tr>
          <tr><th scope="row">Linetype</th><td><div class="ml-px h-px w-[36px] bg-white"></div></td></tr>
          <tr><th scope="row">Linetype Scale</th><td>1.0000</td></tr>
          <tr><th scope="row">Lineweight</th><td><div class="ml-px h-px w-[36px] bg-white"></div></td></tr>
          <tr><th scope="row">Transparency</th><td>ByLa...</td></tr>
          <tr><th scope="row">Thickness</th><td>0.0000</td></tr>
          <tr><th colspan="2">3D Visualization<span></span></th></tr>
          <tr><th scope="row">Material</th><td>ByLa...</td></tr>
          <tr><th colspan="2">Styles<span></span></th></tr>
          <tr><th scope="row">Text style</th><td>Stan...</td></tr>
          <tr><th scope="row">Dimension style</th><td>Stan...</td></tr>
          <tr><th colspan="2">Plot style<span></span></th></tr>
          <tr><th scope="row">Plot style</th><td class="text-[#999]">By C...</td></tr>
          <tr><th scope="row">Plot style table</th><td>None</td></tr>
          <tr><th scope="row">Plot table attached to</th><td class="text-[#999]">Model</td></tr>
          <tr><th scope="row">Plot table type</th><td class="text-[#999]">Not ...</td></tr>
          <tr><th colspan="2">Misc<span></span></th></tr>
          <tr><th scope="row">UCS icon On</th><td>Yes</td></tr>
          <tr><th scope="row">UCS icon at origin</th><td>Yes</td></tr>
          <tr><th scope="row">UCS per viewport</th><td>Yes</td></tr>
          <tr><th scope="row">UCS name</th><td>World</td></tr>
          <tr><th scope="row">Visual style</th><td>2dW</td></tr>
          </tbody>
        </table>
        </div>
        <div class="flex w-[22px] shrink-0 justify-center bg-[#f0f0f0] pt-[20px] pr-px pb-[43px]"><div class="w-[3px] rounded bg-[#858585]"></div></div>
      </div>
    </div>
    <div class="mb-[2px] flex h-[28px] shrink-0 pl-px"><a href="#" class="w-[83px] border border-[#7a7a7a] pt-[5px] text-center text-[#aaa]">3d History</a><a href="#" class="w-[84px] bg-[#7f7f7f] pt-[6px] pr-[2px] text-center text-white">Properties</a></div>
  </aside>
</main>

<!-- Status bar -->
<footer class="flex h-[30px] shrink-0 items-center text-white [&_.on]:border [&_.on]:border-[#5a96e4] [&_.on]:bg-[#4d6684] [&_button]:flex [&_button]:h-[27px] [&_button]:w-[33px] [&_button]:shrink-0 [&_button]:items-center [&_button]:justify-center">
  <span class="w-[185px] shrink-0 text-[14px]">-261.6964,311.6086,0.0000</span>
  <button aria-label="Snap" class="border-l border-[#555]"><svg class="ml-1" width="20" height="20"><path d="M2.500 0V20M7.500 0V20M12.500 0V20M17.500 0V20" stroke="#f0f0f0" stroke-width="4" stroke-dasharray="4 1.200"/></svg></button>
  <button class="on" aria-label="Grid"><svg class="ml-1" width="20" height="20" stroke="#ccc"><path d="M5.500 1V19M10.500 1V19M15.500 1V19M1 5.500H19M1 10.500H19M1 15.500H19"/></svg></button>
  <button class="on" aria-label="Object snap"><svg class="ml-1" width="20" height="20"><path d="M10 17.500H1.500V1.500H18.500V10" stroke="#ccc" fill="none"/><use href="#magnet" x="10" y="11" width="9" height="9"/></svg></button>
  <button class="on" aria-label="3D snap"><svg class="ml-1" width="20" height="20"><path d="M10 18.500H1.500V6.500H12.500V11M1.500 6.500L7 1.500H18.500V10M12.500 6.500L18 1.500" stroke="#ccc" fill="none"/><use href="#magnet" x="10" y="11" width="9" height="9"/></svg></button>
  <button class="on" aria-label="Polar tracking"><svg class="ml-1" width="20" height="20"><path d="M1 18.500H19" stroke="#ccc"/><path d="M1 18L18 1" stroke="#ccc" stroke-dasharray="3 2"/><circle cx="7" cy="12" r="1.500" fill="#4d6684" stroke="#eee"/></svg></button>
  <button class="on" aria-label="Tracking"><svg class="ml-1" width="20" height="20" fill="none" stroke="#ccc"><circle cx="9" cy="11" r="7.500"/><path d="M9 11.500H20M9 11L17 3"/></svg></button>
  <button aria-label="Ortho"><svg class="ml-1" width="20" height="20"><path d="M2.500 2V17.500H18" fill="none" stroke="#ccc" stroke-width="1.500"/></svg></button>
  <button class="on" aria-label="Dynamic input"><svg class="ml-1" width="22" height="20"><path d="M1 7.500H14M7.500 1V14" stroke="#ccc"/><path d="M11 12H21V18H11Z" fill="#eee"/><path d="M12 13H14V17H12Z" fill="#555"/></svg></button>
  <button aria-label="Selection cycling" class="border-r border-[#777]"><svg class="ml-[6px]" width="20" height="20"><path d="M8.500 0V20" stroke="#999"/><path d="M1 3L17 18" stroke="#d39058" stroke-width="1.300"/><circle cx="8.500" cy="10" r="1.500" fill="#65b5ff"/></svg></button>
  <button class="on ml-1" aria-label="Lineweight"><svg class="ml-1" width="20" height="20" stroke="#eee"><path d="M1 2.500H19M1 17H19M10 7.500H19"/><path d="M1 7H10M1 12H19" stroke-width="3"/><path d="M1 17H10" stroke-width="4"/></svg></button>
  <button class="on" aria-label="Fill"><svg class="ml-1" width="20" height="20"><path d="M1 6L6 1M1 11L11 1M1 16L16 1M3 19L19 3M8 19L19 8M13 19L19 13" stroke="#7fb2ee"/><path d="M1 1H19V19H1Z" fill="none" stroke="#ccc"/></svg></button>
  <a href="#" class="ml-[32px] w-[52px] shrink-0 border-r border-[#777] text-center leading-[27px]">MODEL</a>
  <button class="!w-[28px] border-r border-[#777]" aria-label="Lock"><svg width="20" height="20"><path d="M1 1H17V13H1ZM3 16H9" fill="#666" stroke="#8a8a8a"/><path d="M10.500 10V8Q10.500 5 13.500 5Q16.500 5 16.500 8V10" stroke="#aaa" fill="none" stroke-width="1.500"/><path d="M8 10H19V19H8Z" fill="#aaa"/><path d="M13.500 13V16" stroke="#444"/></svg></button>
  <button class="!w-[20px]" aria-label="Model space"><svg width="17" height="15"><path d="M1 1H16V14H1Z" fill="#ddd" stroke="#999" stroke-width="2"/><path d="M5 11.500V4L8.500 9L12 4V11.500" fill="none" stroke="#555" stroke-width="1.600"/></svg></button>
  <div class="ml-auto flex shrink-0 items-center [&>button.border-l]:pl-1">
    <svg class="mr-px" width="12" height="8"><path d="M1 1H11L6 7Z" fill="#444" stroke="#333"/></svg>
    <button class="!w-[28px] border-l border-[#777] !pl-0" aria-label="Isolate"><svg width="20" height="22"><path d="M11 3.500H17.500V12M2.500 12V19.500H12" fill="none" stroke="#999" stroke-dasharray="5 1"/><use href="#bulb" x="0" y="1" width="9" height="12" class="text-[#fab36c]"/><use href="#cur" x="12" y="10" width="8" height="11" class="text-white"/></svg></button>
    <button class="!w-[27px] border-l border-[#777] !pl-0" aria-label="Bulb"><svg width="16" height="20"><use href="#bulb" class="text-[#ccc]"/></svg></button>
    <button class="on" aria-label="Selection"><svg width="23" height="22"><path d="M3 1H11V10H3Z" fill="#888"/><path d="M3 12H11V20H3Z" fill="#72b0f7"/><use href="#cur" x="15" y="10" width="8" height="11" class="text-white"/></svg></button>
    <button class="on" aria-label="Quick properties"><svg width="22" height="22"><use href="#cur" x="1" y="1" width="10" height="15" class="text-white"/><path d="M10 10H21V21H10Z" fill="#eee"/><path d="M12 13.500H19M12 16.500H19M12 19H19" stroke="#555"/></svg></button>
    <button aria-label="Panels"><svg class="ml-1" width="14" height="20"><path d="M.5 1H13.500V19.500H.5Z" fill="#333" stroke="#ddd"/><path d="M0 2H14" stroke="#eee" stroke-width="3"/><path d="M3 7.500H5M7 7.500H12M3 11.500H5M7 11.500H12M3 15.500H5M7 15.500H12" stroke="#ddd"/></svg></button>
    <button class="on" aria-label="Dynamic UCS"><svg width="22" height="20"><path d="M3.500 19V2M1 5L3.500 1L6 5M3 17.500H19M16 15L19 17.500L16 20M3 18L10 11" fill="none" stroke="#ccc"/><path d="M14 1L11 8H14L12 14L19 6H15L18 1Z" fill="#ddd"/></svg></button>
    <span class="w-[90px] pr-px pb-[5px] text-center">m1:1</span>
    <button class="border-l border-[#777] !pl-[2px]" aria-label="Pan"><svg width="18" height="20"><path d="M4 18L0 10L2 9L5 12L3 3L5 2L8 9L8 1H10L11 9L13 2L15 3L14 10L16 6L18 7L15 17L13 20H6Z" fill="#fff"/></svg></button>
    <button class="border-l border-[#777]" aria-label="Zoom"><svg class="text-[#e5e5e5]" width="20" height="20"><use href="#lens"/></svg></button>
    <button class="border-l border-[#777]" aria-label="Zoom window"><svg width="20" height="20"><path d="M1 1H19V19H1Z" fill="#75b4fb" /><use href="#lens" x="2" y="3" width="17" height="17" class="text-[#4f6a8d]"/></svg></button>
    <button class="border-l border-[#777]" aria-label="Zoom all"><svg width="20" height="20"><path d="M1 1H19V19H1Z" fill="none" stroke="#6695d0"/><use href="#lens" x="3" y="3" width="17" height="17" class="text-[#ccc]"/></svg></button>
    <button class="border-l border-[#777]" aria-label="Orbit"><svg width="20" height="20" fill="none" stroke="#aaa"><ellipse cx="10" cy="10" rx="9.500" ry="5"/><path d="M10 1V20M8 4L10 1L12 4M12 12L15 15L12 18"/></svg></button>
    <button class="border-l border-[#777]" aria-label="Regenerate"><svg width="20" height="20"><circle cx="10" cy="10" r="7.500" fill="none" stroke="#73b0f4" stroke-width="2.200" stroke-dasharray="12 3.700"/><path d="M14 2L19 7H13ZM5 1V7L1 6ZM2 13L8 14L4 18ZM12 14L17 16L12 19Z" fill="#73b0f4"/></svg></button>
    <button class="!w-[28px] border-l border-[#777] !pl-0" aria-label="Lock interface"><svg width="21" height="22"><path d="M1 2H12V9H1Z" fill="#444" stroke="#ccc"/><path d="M5 11H9" stroke="#ddd"/><path d="M18.500 13V10Q18 7 14 8" fill="none" stroke="#aa7444" stroke-width="1.500"/><path d="M10 13H20V21H10Z" fill="#fbb269"/><path d="M15 16V18" stroke="#555"/></svg></button>
    <button class="border-r border-l border-[#777]" aria-label="Full screen"><svg width="20" height="16"><path d="M1 1H19V15H1Z" fill="#555" stroke="#aaa" stroke-width="1.500"/><path d="M4 6V4H7M13 4H16V6M16 10V12H13M7 12H4V10" stroke="#ddd" fill="none" stroke-width="1.500"/></svg></button>
    <svg class="mt-4 ml-[10px]" width="12" height="12"><path d="M9 1h2v2h-2zM6 4h2v2h-2zM9 4h2v2h-2zM3 7h2v2h-2zM6 7h2v2h-2zM9 7h2v2h-2zM0 10h2v2h-2zM3 10h2v2h-2zM6 10h2v2h-2z" fill="#111"/></svg>
  </div>
</footer>
</div>
<script>
// Drawing grid: minor lines at every fifth of a major cell, both counted from the UCS origin.
const step = 14.12, ox = 532, oy = 440;
let minor = '', major = '';
for (let k = -40; k < 140; k++) {
  const x = Math.round(ox + k * step) + .5;
  const y = Math.round(oy + k * step) + .5;
  const s = 'M' + x + ' 0V2000M0 ' + y + 'H3000';
  if (k % 5 === 0) major += s; else minor += s;
}
document.getElementById('minor').setAttribute('d', minor);
document.getElementById('major').setAttribute('d', major);
</script>
</body>
</html>
